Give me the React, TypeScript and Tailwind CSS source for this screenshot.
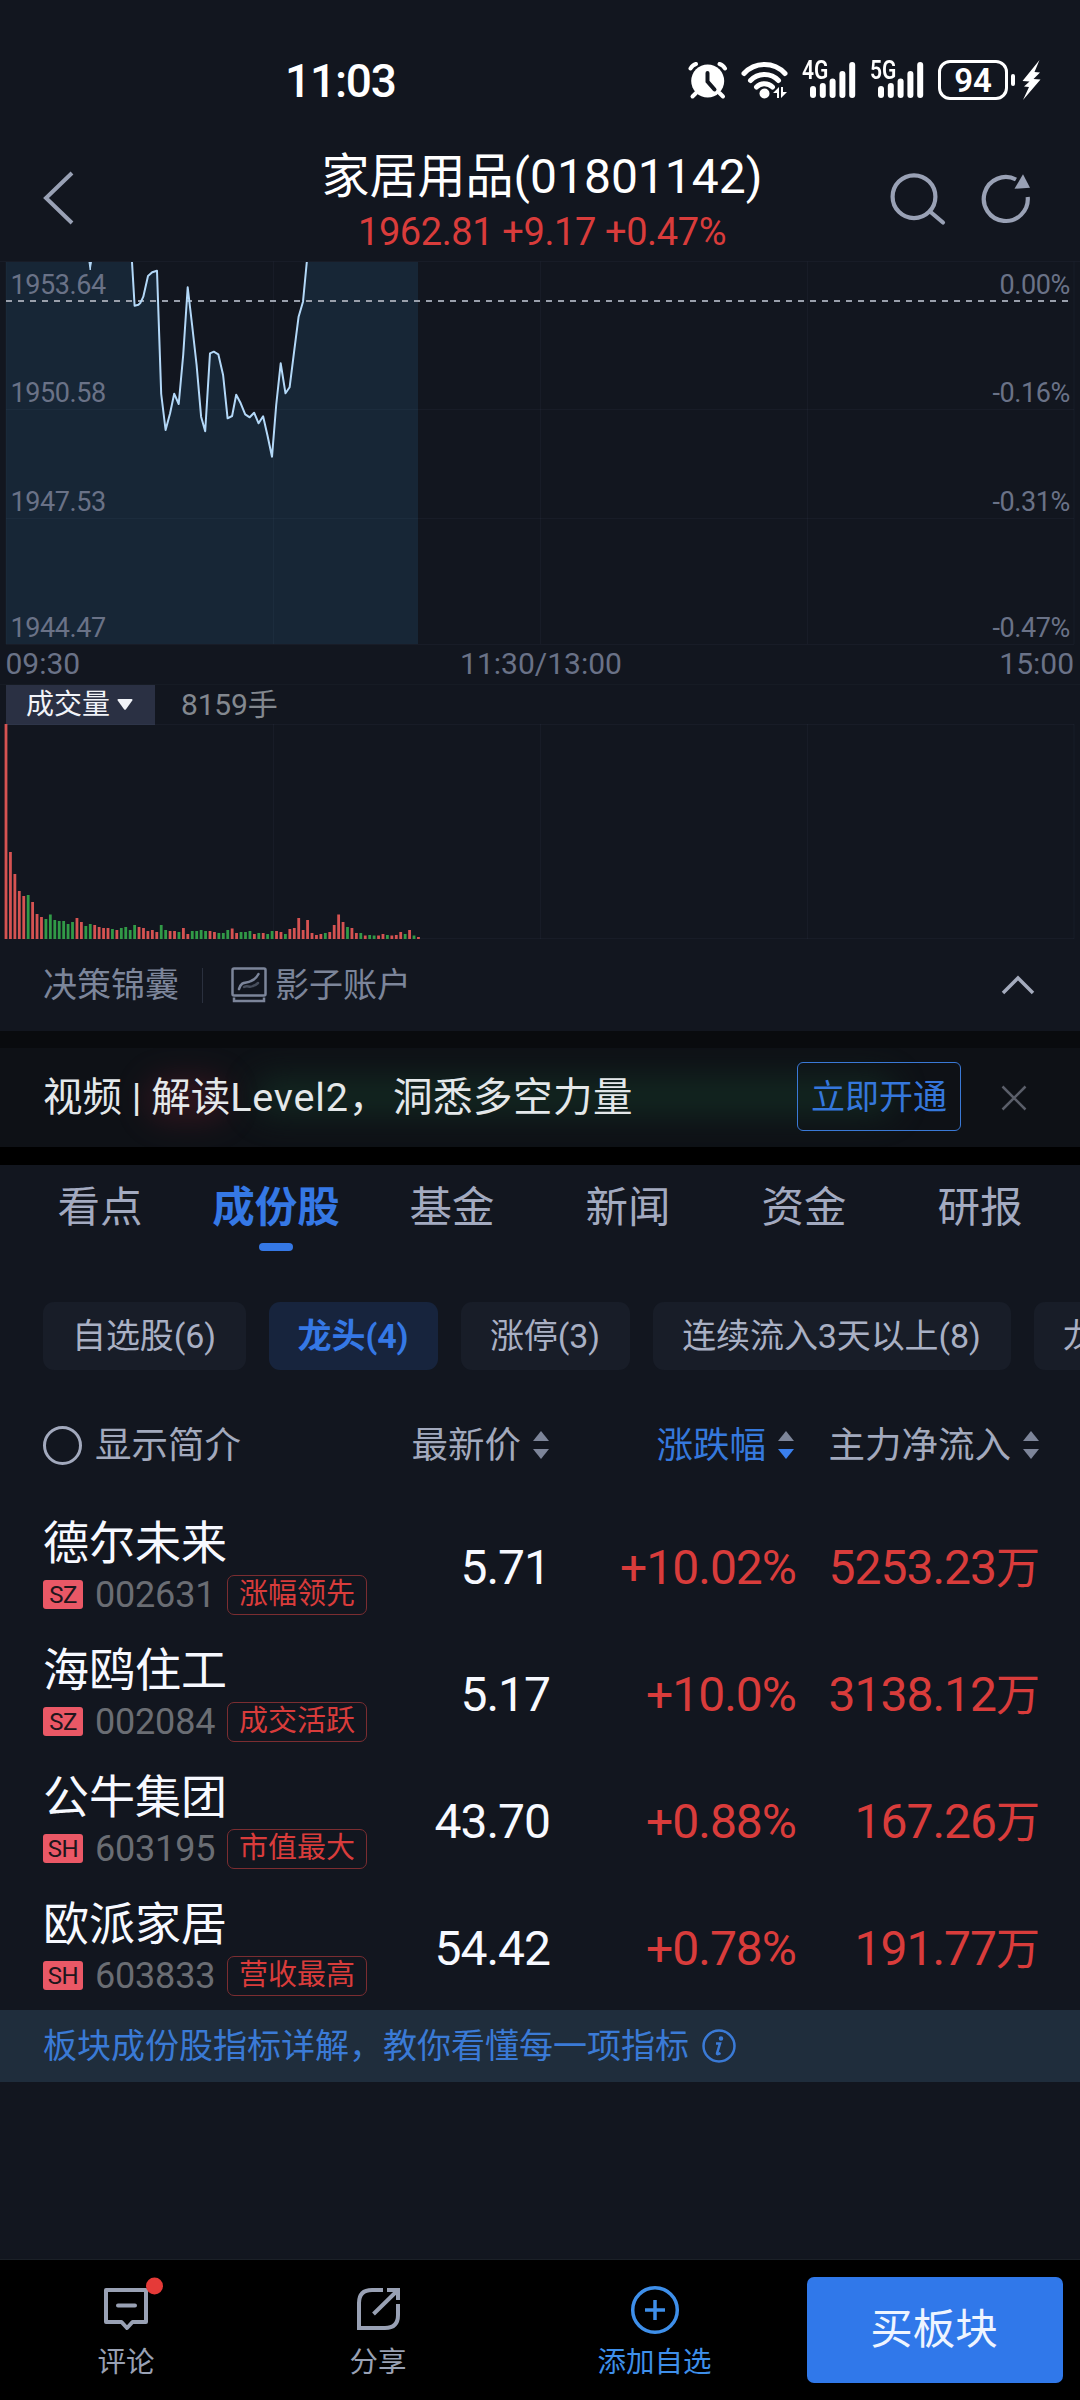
import { FunctionComponent, ReactNode } from "react"

interface IStock {
    name: string;
    market: string;
    code: string;
    tag: string;
    price: string;
    change: string;
    inflow: string;
}

const stocks: IStock[] = [
    { name: "德尔未来", market: "SZ", code: "002631", tag: "涨幅领先", price: "5.71", change: "+10.02%", inflow: "5253.23万" },
    { name: "海鸥住工", market: "SZ", code: "002084", tag: "成交活跃", price: "5.17", change: "+10.0%", inflow: "3138.12万" },
    { name: "公牛集团", market: "SH", code: "603195", tag: "市值最大", price: "43.70", change: "+0.88%", inflow: "167.26万" },
    { name: "欧派家居", market: "SH", code: "603833", tag: "营收最高", price: "54.42", change: "+0.78%", inflow: "191.77万" },
]

const tabs = ["看点", "成份股", "基金", "新闻", "资金", "研报"]

const chips = [
    { label: "自选股(6)", width: "w-[203px]" },
    { label: "龙头(4)", width: "w-[169px]" },
    { label: "涨停(3)", width: "w-[169px]" },
    { label: "连续流入3天以上(8)", width: "w-[358px]" },
    { label: "龙虎榜(1)", width: "w-[203px]" },
]

const priceLine =
    "132,1 134.6,44.7 138.4,43.7 140.5,41.7 143.3,35.7 148,15 152.2,11.3 157,9.7 161.2,133 165.6,169 170.1,152.3 174.2,132.7 178.7,143 183.2,94 187.7,26.3 192.1,64 196.6,104 201.1,155.7 205.2,170.3 210,92.3 213.8,90.7 218.3,93.3 223.1,114 227.6,157.3 232.1,155 236.2,133.7 240.7,142.3 245.2,153.3 249.7,156.3 254.1,151.7 258.6,162.3 263.1,155.3 267.6,175 272,195.7 276.2,144 280.7,102.3 285.5,132.3 289.6,126.3 294.1,90.7 298.6,55.7 303,40.7 306.8,1"

// minute volumes, r = up, g = down
const volumes =
    "r215 r87 r65 r48 r43 g44 r37 r25 r22 g20 g24.5 g19 g18 g18 g15 g17 r21 r17 g13 g15 r14 r12 r11 r11 g10 r9 g11 g12 g9 g14 r12 r11 r8 r9 r7 g14 g9 r8 r8 g7 r11 r5 g8 g8 g9 g8 r8 r7 g6 g6 g9 r10.5 r6 g7 g7 g8 r5 g6 r6 g5 g8 r8 r7 g5 r10 r11 r21 r9 r19 r6 r4 r5 g6 r7 r14 r24.5 r17 g12 r11 r6 g6 r3.5 g4 g3.5 r3.5 r5 g4 r3.5 r4 r7 g5 r9 g3.5 r2".split(" ")

const levels = [
    { y: 33, price: "1953.64", pct: "0.00%" },
    { y: 141, price: "1950.58", pct: "-0.16%" },
    { y: 250, price: "1947.53", pct: "-0.31%" },
    { y: 376, price: "1944.47", pct: "-0.47%" },
]

const Signal: FunctionComponent<{ label: string }> = ({ label }) => (
    <div className="relative h-[40px] w-[55px]">
        <svg width="55" height="40" viewBox="0 0 55 40" fill="#fff">
            <rect x="8" y="26" width="6" height="12" rx="3" />
            <rect x="17.8" y="23" width="6" height="15" rx="3" />
            <rect x="27.6" y="18.5" width="6" height="19.5" rx="3" />
            <rect x="37.4" y="11" width="6" height="27" rx="3" />
            <rect x="47.2" y="2" width="6" height="36" rx="3" />
        </svg>
        <span className="absolute left-0 -top-px origin-left scale-x-[.84] text-[25px] font-semibold leading-[24px]">{label}</span>
    </div>
)

const StatusBar = () => (
    <div className="flex h-[160px] items-center pl-[285px] text-white">
        <span className="w-[403px] pt-[2px] text-[46px] font-medium leading-none tracking-[-1.2px]">11:03</span>
        <svg width="40" height="40" viewBox="0 0 40 40" fill="none" stroke="#fff" strokeLinecap="round">
            <circle cx="19.7" cy="21" r="16.5" fill="#fff" stroke="none" />
            <path d="M2.5 8.5 Q4.5 5 8 4M37 8.5 Q35 5 31.5 4" strokeWidth="4" />
            <path d="M8 33l-3.5 3.5M31.5 33l3.5 3.5" strokeWidth="4" />
            <path d="M19.5 13v8.5l7 8" stroke="#12161f" strokeWidth="4" />
        </svg>
        <svg className="ml-[12px]" width="50" height="40" viewBox="0 0 50 40" fill="none" stroke="#fff" strokeWidth="5" strokeLinecap="round">
            <path d="M4 13.5C15 1.500 34 1.500 45 13.500M10.500 20.500C18 12.500 31 12.500 38.500 20.500M16.500 27C21 22.500 28 22.500 32.500 27" />
            <circle cx="24.500" cy="33.500" r="5" fill="#fff" stroke="none" />
            <path d="M33 33l6-6v11h-2v-5zM41 27v11l6-6h-4v-5z" fill="#fff" stroke="none" />
        </svg>
        <div className="ml-[12px] flex gap-[13px]">
            <Signal label="4G" />
            <Signal label="5G" />
        </div>
        <div className="ml-[13px] flex h-[40px] w-[70px] items-center justify-center rounded-[12px] border-[3px] border-white text-[33px] font-semibold leading-none">94</div>
        <div className="ml-[3px] h-[12px] w-[4px] rounded-[2px] bg-white" />
        <svg className="ml-[7px]" width="19" height="40" viewBox="0 0 19 40" fill="#fff">
            <path d="M17.500 0L0.500 21l7 .500-5.500 5 5 .500L1 40 18.500 19.500l-7-.500 6.500-6.500-5.500-.500z" />
        </svg>
    </div>
)

const Header = () => (
    <div className="grid h-[101px] grid-cols-[240px_600px_240px] items-start text-[#99a1b5]">
        <svg className="ml-[42px] mt-[11px]" width="34" height="54" viewBox="0 0 34 54" fill="none" stroke="currentColor" strokeWidth="4">
            <path d="M30 2L4 27l26 25" />
        </svg>
        <div className="pl-[4px] text-center">
            <h1 className="text-[48px] leading-[34px] text-white">家居用品(01801142)</h1>
            <p className="mt-[19px] text-[38px] leading-[39px] tracking-[-0.4px] text-[#d93c3b]">1962.81 +9.17 +0.47%</p>
        </div>
        <div className="flex pl-[49px] pt-[12px]">
            <svg width="58" height="56" viewBox="0 0 58 56" fill="none" stroke="currentColor" strokeWidth="4.200">
                <circle cx="25" cy="24.700" r="21.400" />
                <path d="M41 39.500l13 11" strokeLinecap="round" />
            </svg>
            <svg className="ml-[32px]" width="54" height="56" viewBox="0 0 54 56" fill="none" stroke="currentColor" strokeWidth="4.200">
                <path d="M48.700 25A22 22 0 1 1 37 7.500" />
                <path d="M44 2.300l7 13.500-15.500 1z" fill="currentColor" stroke="none" />
            </svg>
        </div>
    </div>
)

const PriceChart = () => (
    <svg className="block" width="1080" height="423" viewBox="0 0 1080 423">
        <polygon points={`6,1 ${priceLine} 418,1 418,383 6,383`} fill="#172636" />
        <path d="M0 .5H1080M6 148.500H1074M6 257.500H1074M6 383.500H1074M6 .5V383M273.500 .5V383M540.500 .5V383M807.500 .5V383M1074 .5V383" stroke="#8fa3c0" strokeOpacity=".05" fill="none" />
        <path d="M6 40H1070" stroke="#9aa0ac" strokeWidth="2" strokeDasharray="6 6" />
        <path d="M89 1l1.200 8 1.200-8" stroke="#b3d8f8" fill="#b3d8f8" />
        <polyline points={priceLine} fill="none" stroke="#b3d8f8" strokeWidth="2" strokeLinejoin="round" />
        <g fontSize="27" fill="#6a7287" letterSpacing="-.4">
            {levels.map((l) => (
                <g key={l.price}>
                    <text x="10.500" y={l.y}>{l.price}</text>
                    <text x="1070" y={l.y} textAnchor="end">{l.pct}</text>
                </g>
            ))}
        </g>
        <g fontSize="30" fill="#6a7287">
            <text x="5.500" y="413">09:30</text>
            <text x="541" y="413" textAnchor="middle">11:30/13:00</text>
            <text x="1074" y="413" textAnchor="end">15:00</text>
        </g>
    </svg>
)

const VolumeChart = () => (
    <div>
        <div className="flex h-[40px] items-center border-t border-[#161b24] pl-[6px]">
            <div className="flex h-[40px] w-[149px] items-center gap-[7px] bg-[#2a3043] pl-[20px] text-[28px] leading-none text-[#f1f3f8]">
                <span className="pt-px">成交量</span>
                <svg width="16" height="11" viewBox="0 0 16 11" fill="currentColor"><path d="M1.500 0h13q1.500 0 .8 1.500L9 10.300q-1 1-2 0L.7 1.500Q0 0 1.500 0z" /></svg>
            </div>
            <span className="ml-[26px] text-[30px] leading-none tracking-[-0.2px] text-[#83888f]">8159手</span>
        </div>
        <svg className="block" width="1080" height="215" viewBox="0 0 1080 215">
            <path d="M6 .5H1074M6 214.500H1074M273.500 0V215M540.500 0V215M807.500 0V215M1074 0V215" stroke="#8fa3c0" strokeOpacity=".05" />
            {volumes.map((v, i) => {
                const h = Number(v.slice(1))
                return <rect key={i} x={4.6 + i * 4.435} y={215 - h} width="2.800" height={h} fill={v[0] === "r" ? "#d65352" : "#319a47"} />
            })}
        </svg>
    </div>
)

const ToolRow = () => (
    <div className="flex h-[92px] items-center pl-[43px] pr-[45px] text-[34px] leading-none text-[#7c859a]">
        <span>决策锦囊</span>
        <div className="ml-[23px] h-[35px] w-px bg-[#2a303e]" />
        <svg className="ml-[28px]" width="36" height="36" viewBox="0 0 36 36" fill="none" stroke="currentColor" strokeWidth="2.500">
            <rect x="1.500" y="1.500" width="33" height="27" rx="1.500" />
            <path d="M3 30.500v3.500h30v-3.500" />
            <path d="M8 22c3-9 7-5 12-8q5-2 7.500-7" strokeLinecap="round" />
            <path d="M13 20c4-2 5 1 9-1q3-1 5-3" strokeOpacity=".5" strokeLinecap="round" />
        </svg>
        <span className="ml-[8px]">影子账户</span>
        <svg className="ml-auto" width="34" height="22" viewBox="0 0 34 22" fill="none" stroke="#a4abbd" strokeWidth="3.500">
            <path d="M2 19L17 4l15 15" />
        </svg>
    </div>
)

const Banner = () => (
    <div className="border-b-[18px] border-t-[17px] border-b-black border-t-[#090b0e] bg-[#0e1116]">
        <div className="relative flex h-[99px] items-center overflow-hidden pl-[43px]">
            <div className="absolute left-[145px] top-[28px] h-[46px] w-[85px] rounded-full bg-[#3a1620] opacity-70 blur-[14px]" />
            <div className="absolute left-[255px] top-[30px] h-[36px] w-[640px] rounded-full bg-[#142e24] opacity-80 blur-[16px]" />
            <span className="relative w-[754px] whitespace-pre text-[39.500px] leading-none text-[#e4e8ea]">视频 | 解读<span className="tracking-[0.8px]">Level2，</span><span className="ml-[4px] tracking-[0.5px]">洞悉多空力量</span></span>
            <button className="relative -top-px flex h-[69px] w-[164px] items-center justify-center rounded-[6px] border-[1.500px] border-[#3a79d6] pt-px text-[34px] leading-none text-[#3577dc]">立即开通</button>
            <svg className="ml-[40px]" width="26" height="26" viewBox="0 0 26 26" fill="none" stroke="#5a5e69" strokeWidth="2.500">
                <path d="M1.500 1.500l23 23M24.500 1.500l-23 23" />
            </svg>
        </div>
    </div>
)

const Tabs = () => (
    <div className="flex px-[12px] pt-[21px]">
        {tabs.map((tab) => {
            const active = tab === "成份股"
            return (
                <div key={tab} className="flex h-[65px] w-[176px] flex-col items-center justify-between">
                    <span className={active ? "text-[42.500px] font-bold leading-[43px] text-[#3578e5]" : "text-[42.500px] leading-[43px] text-[#a3aac0]"}>{tab}</span>
                    {active && <div className="h-[8px] w-[34px] rounded-[4px] bg-[#3578e5]" />}
                </div>
            )
        })}
    </div>
)

const Chips = () => (
    <div className="mt-[51px] flex gap-[23px] overflow-hidden pl-[43px] text-[34px] leading-none tracking-[-0.1px]">
        {chips.map((chip, i) => (
            <div
                key={chip.label}
                className={`flex h-[68px] shrink-0 items-center justify-center rounded-[11px] pr-px ${chip.width} ${i === 1 ? "bg-[#17243d] font-bold text-[#3578e5]" : "bg-[#181d28] text-[#a9b0c4]"}`}
            >
                {chip.label}
            </div>
        ))}
    </div>
)

const SortLabel: FunctionComponent<{ children: ReactNode; active?: boolean }> = ({ children, active }) => (
    <div className={`flex items-center justify-end gap-[12px] ${active ? "text-[#3578dc]" : ""}`}>
        <span className="pt-[2px]">{children}</span>
        <svg width="16" height="28" viewBox="0 0 16 28">
            <path d="M8 0l8 10H0z" fill="#7d8599" />
            <path d="M8 28l8-10H0z" fill={active ? "#3a80ee" : "#7d8599"} />
        </svg>
    </div>
)

const StockRow: FunctionComponent<{ stock: IStock }> = ({ stock }) => (
    <div className="grid h-[127px] grid-cols-[326px_181px_246px_243px] items-center pl-[43px] pt-[4px] text-right text-[48px] leading-none tracking-[-1px] text-[#d93c3b]">
        <div className="text-left tracking-normal">
            <p className="text-[46px] leading-[45px] text-[#f7f9ff]">{stock.name}</p>
            <div className="mt-[9px] flex h-[40px] items-center">
                <span className="flex h-[29px] w-[40px] shrink-0 items-center justify-center rounded-[3px] bg-[#ea5866] text-[24px] tracking-[-0.5px] text-[#20161c]">{stock.market}</span>
                <span className="ml-[12px] w-[132px] shrink-0 text-[36px] tracking-[-0.2px] text-[#6a6d73]">{stock.code}</span>
                <span className="flex h-[40px] w-[140px] shrink-0 items-center justify-center rounded-[7px] border border-[#7b2d31] text-[29px]">{stock.tag}</span>
            </div>
        </div>
        <span className="text-[#f7f9ff]">{stock.price}</span>
        <span>{stock.change}</span>
        <span>{stock.inflow.slice(0, -1)}<span className="text-[44px]">{stock.inflow.slice(-1)}</span></span>
    </div>
)

const BottomBar = () => (
    <div className="flex h-[141px] border-t border-[#1b2027] bg-black text-[28.500px] leading-none text-[#99a1b4]">
        <div className="flex w-[252px] flex-col items-center pt-[15px]">
            <svg width="80" height="60" viewBox="0 0 80 60" fill="none" stroke="currentColor" strokeWidth="4" strokeLinejoin="round" strokeLinecap="round">
                <path d="M20 15h40v32H46.500l-5.500 6-5.500-6H20zM32 30.500h17" />
                <circle cx="68.500" cy="11" r="8.500" fill="#e53a38" stroke="none" />
            </svg>
            <span className="mt-[14px]">评论</span>
        </div>
        <div className="flex w-[252px] flex-col items-center pt-[15px]">
            <svg width="60" height="60" viewBox="0 0 60 60" fill="none" stroke="currentColor" strokeWidth="4">
                <path d="M35 15H24Q11 15 11 28V53H37Q50 53 50 40V29" />
                <path d="M39 15H50V25M50 15L25.500 39" />
            </svg>
            <span className="mt-[14px]">分享</span>
        </div>
        <div className="flex w-[301px] flex-col items-center pt-[15px] text-[#3e8fea]">
            <svg width="60" height="60" viewBox="0 0 60 60" fill="none" stroke="currentColor" strokeWidth="3.500">
                <circle cx="30" cy="35" r="22.300" />
                <path d="M30 25v20M20 35h20" />
            </svg>
            <span className="mt-[14px]">添加自选</span>
        </div>
        <button className="ml-[2px] mt-[17px] flex h-[106px] w-[256px] items-center justify-center rounded-[7px] bg-[#3078ea] pr-[2px] text-[42.500px] text-[#eef4ff]">买板块</button>
    </div>
)

const App = () => {
    return (
        <div className="flex h-[2400px] w-[1080px] flex-col overflow-hidden bg-[#12161f] font-['Roboto','Noto_Sans_CJK_SC',sans-serif]">
            <StatusBar />
            <Header />
            <PriceChart />
            <VolumeChart />
            <ToolRow />
            <Banner />
            <Tabs />
            <Chips />

            <div className="mb-[12px] mt-[30px] grid h-[90px] grid-cols-[506px_245px_245px] pl-[43px] text-[36.500px] leading-none text-[#a2a9bd]">
                <div className="grid grid-cols-[1fr_auto] items-center">
                    <div className="flex items-center gap-[13px]">
                        <div className="h-[39px] w-[39px] rounded-full border-[3.500px] border-[#a2a9bd]" />
                        <span className="pt-[2px]">显示简介</span>
                    </div>
                    <SortLabel>最新价</SortLabel>
                </div>
                <SortLabel active>涨跌幅</SortLabel>
                <SortLabel>主力净流入</SortLabel>
            </div>

            {stocks.map((stock) => (
                <StockRow key={stock.code} stock={stock} />
            ))}

            <div className="flex h-[72px] items-center bg-[#1f2d3c] pl-[43px] text-[34px] leading-none text-[#3a7ad6]">
                板块成份股指标详解，教你看懂每一项指标
                <svg className="ml-[13px]" width="34" height="34" viewBox="0 0 34 34" fill="none" stroke="currentColor" strokeWidth="2.500">
                    <circle cx="17" cy="17" r="15.500" />
                    <path d="M14 14.500h4l-3 10q0 1.500 3.500-.5" />
                    <circle cx="19" cy="9.500" r="1" fill="currentColor" />
                </svg>
            </div>

            <div className="flex-1" />
            <BottomBar />
        </div>
    )
}

export default App
